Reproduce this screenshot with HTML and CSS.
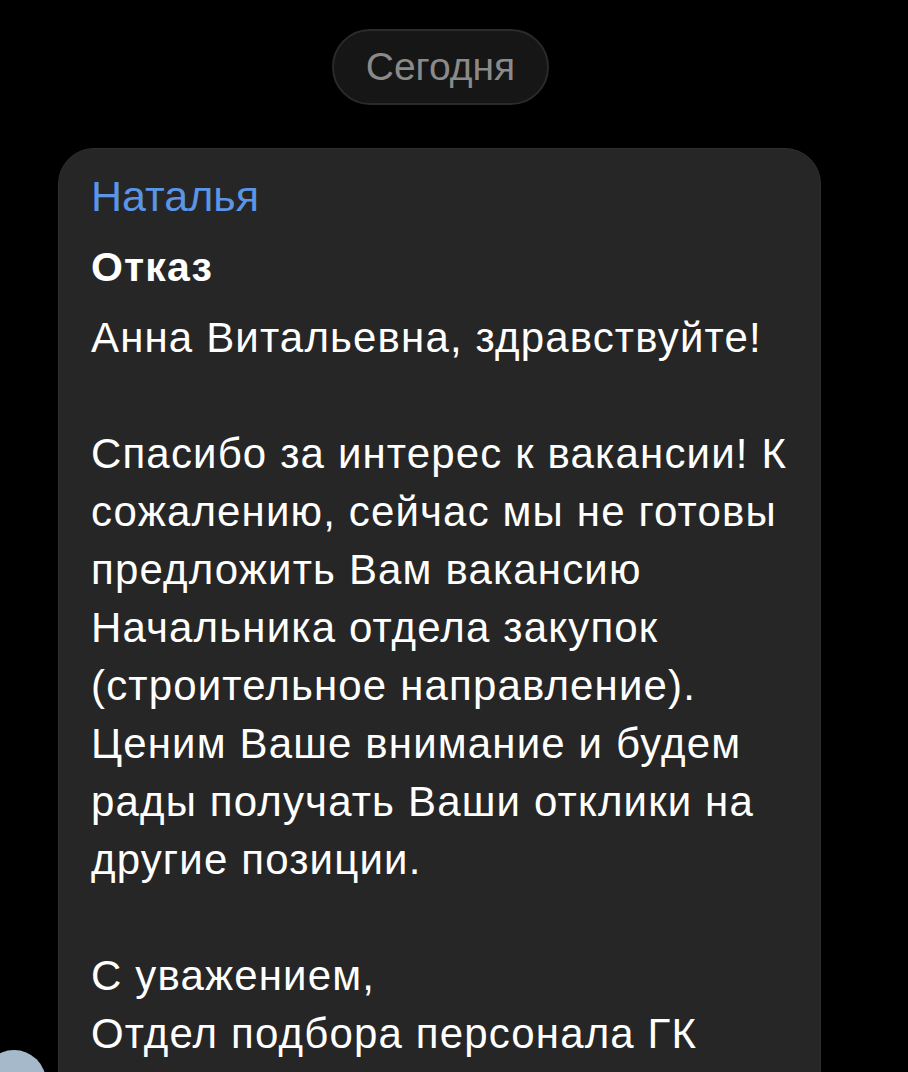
FILE: index.html
```html
<!DOCTYPE html>
<html lang="ru">
<head>
<meta charset="utf-8">
<link rel="stylesheet" href="styles.css">
</head>
<body>
<div class="page">
  <div class="date-pill">Сегодня</div>
  <div class="bubble">
    <div class="sender">Наталья</div>
    <div class="subject">Отказ</div>
    <div class="text">
      <p>Анна Витальевна, здравствуйте!</p>
      <p>Спасибо за интерес к вакансии! К<br>сожалению, сейчас мы не готовы<br>предложить Вам вакансию<br>Начальника отдела закупок<br>(строительное направление).<br>Ценим Ваше внимание и будем<br>рады получать Ваши отклики на<br>другие позиции.</p>
      <p>С уважением,<br>Отдел подбора персонала ГК</p>
    </div>
  </div>
  <div class="avatar"></div>
</div>
</body>
</html>
```
FILE: styles.css
```css
html, body {
  margin: 0;
  padding: 0;
  background: #000;
  height: 100%;
  overflow: hidden;
}
.page {
  position: relative;
  display: flex;
  flex-direction: column;
  align-items: center;
  padding-top: 29px;
  font-family: "Liberation Sans", Arial, sans-serif;
  height: 100%;
  box-sizing: border-box;
}
.date-pill {
  height: 72px;
  line-height: 72px;
  padding: 0 32px;
  margin-right: 27px;
  border-radius: 38px;
  background: #161616;
  border: 2px solid #2a2a2a;
  color: #8a8a8a;
  font-size: 39px;
}
.bubble {
  align-self: flex-start;
  margin-top: 43px;
  margin-left: 58px;
  width: 763px;
  box-sizing: border-box;
  padding: 23px 32px 40px;
  background: #262626;
  border: 1px solid #2f2f2f;
  border-radius: 36px;
  color: #fff;
}
.sender {
  font-size: 43px;
  line-height: 48px;
  color: #5a95e6;
}
.subject {
  margin-top: 23px;
  font-size: 41px;
  line-height: 48px;
  font-weight: bold;
  letter-spacing: 1.2px;
}
.text {
  margin-top: 18px;
  font-size: 42px;
  line-height: 58px;
  letter-spacing: 1.15px;
  white-space: nowrap;
}
.text p {
  margin: 0 0 58px;
}
.avatar {
  position: absolute;
  left: -18px;
  top: 1050px;
  width: 64px;
  height: 64px;
  border-radius: 50%;
  background: #a6b9cb;
}
```
